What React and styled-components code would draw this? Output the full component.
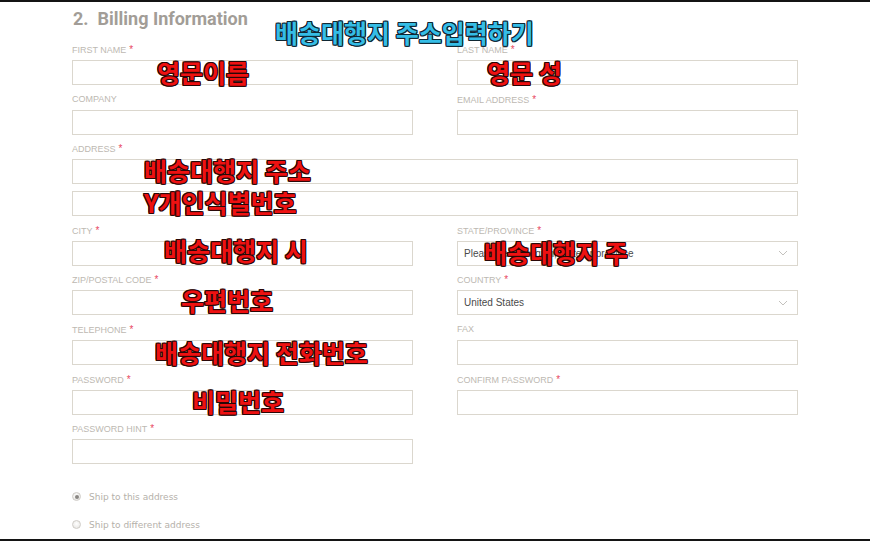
import React from 'react';
import styled, { createGlobalStyle } from 'styled-components';

const GlobalStyle = createGlobalStyle`
  html, body {
    margin: 0;
    padding: 0;
    background: #ffffff;
  }
  body {
    font-family: "Liberation Sans", Arial, sans-serif;
  }
  * {
    box-sizing: border-box;
  }
`;

const Page = styled.div`
  width: 870px;
  height: 541px;
  border-top: 2px solid #141414;
  border-bottom: 2px solid #141414;
  padding: 6px 72px 0 72px;
  overflow: hidden;
`;

const Header = styled.div`
  position: relative;
  height: 22px;
  margin-bottom: 14px;
`;

const Title = styled.h2`
  margin: 0;
  padding-left: 1px;
  font-family: Roboto, "Liberation Sans", sans-serif;
  font-weight: 700;
  font-size: 18px;
  line-height: 22px;
  color: #a29d97;
  white-space: pre;
`;

const Banner = styled.div`
  position: absolute;
  left: 203px;
  top: 10px;
  font-family: "Noto Sans CJK KR", sans-serif;
  font-weight: 700;
  font-size: 25px;
  line-height: 28px;
  color: #35bde6;
  white-space: nowrap;
  text-shadow:
    1px 0 #0f2733, -1px 0 #0f2733, 0 1px #0f2733, 0 -1px #0f2733,
    1px 1px #0f2733, -1px -1px #0f2733, 1px -1px #0f2733, -1px 1px #0f2733;
`;

const Grid = styled.div`
  display: grid;
  grid-template-columns: 1fr 1fr;
  column-gap: 44px;
`;

const Field = styled.div`
  position: relative;
  grid-column: ${(p) => (p.$wide ? '1 / span 2' : 'auto')};
  margin-bottom: 8.6px;
`;

const Label = styled.label`
  display: block;
  height: 11px;
  margin-bottom: 5px;
  font-size: 9px;
  line-height: 11px;
  color: #bdb9b2;
  text-transform: uppercase;
  white-space: nowrap;
`;

const Star = styled.span`
  color: #e8485f;
  font-size: 10px;
  margin-left: 3px;
`;

const Input = styled.div`
  height: 25px;
  border: 1px solid #dbd7ce;
  background: #ffffff;
  margin-top: ${(p) => (p.$next ? '7px' : '0')};
`;

const Select = styled.div`
  height: 25px;
  border: 1px solid #dbd7ce;
  background: #ffffff;
  display: flex;
  align-items: center;
  justify-content: space-between;
  padding: 0 9px 0 6px;
  font-size: 10px;
  color: #4a4a4a;
`;

const Chevron = () => (
  <svg width="10" height="6" viewBox="0 0 10 6" fill="none">
    <path d="M1 1 L5 5 L9 1" stroke="#bcbab6" strokeWidth="0.9" />
  </svg>
);

const Note = styled.span`
  position: absolute;
  left: ${(p) => p.$x}px;
  top: ${(p) => p.$y}px;
  font-family: "Noto Sans CJK KR", sans-serif;
  font-weight: 700;
  font-size: 25px;
  line-height: 28px;
  color: #ee1111;
  white-space: nowrap;
  pointer-events: none;
  text-shadow:
    1px 0 #2a0707, -1px 0 #2a0707, 0 1px #2a0707, 0 -1px #2a0707,
    1px 1px #2a0707, -1px -1px #2a0707, 1px -1px #2a0707, -1px 1px #2a0707;
`;

const Radios = styled.div`
  margin-top: 10px;
`;

const RadioRow = styled.div`
  height: 28px;
  display: flex;
  align-items: center;
`;

const Dot = styled.span`
  width: 9px;
  height: 9px;
  border-radius: 50%;
  border: 1px solid #cfccc7;
  background: radial-gradient(circle at 50% 40%, #ffffff, #e4e2de);
  display: flex;
  align-items: center;
  justify-content: center;
  margin-right: 8px;

  &::after {
    content: '';
    width: 4px;
    height: 4px;
    border-radius: 50%;
    background: ${(p) => (p.$checked ? '#8a8783' : 'transparent')};
  }
`;

const RadioText = styled.span`
  font-family: "DejaVu Sans", Verdana, sans-serif;
  font-size: 9px;
  color: #b5b1aa;
`;

const fields = [
  { label: 'First Name', req: true, note: ['영문이름', 85, 14] },
  { label: 'Last Name', req: true, note: ['영문 성', 30, 14] },
  { label: 'Company' },
  { label: 'Email Address', req: true },
  { label: 'Address', req: true, wide: true, double: true, note: ['배송대행지 주소', 72, 13], note2: ['Y개인식별번호', 72, 45] },
  { label: 'City', req: true, note: ['배송대행지 시', 92, 11] },
  { label: 'State/Province', req: true, select: 'Please select region, state or province', note: ['배송대행지 주', 27, 13] },
  { label: 'Zip/Postal Code', req: true, note: ['우편번호', 109, 12] },
  { label: 'Country', req: true, select: 'United States' },
  { label: 'Telephone', req: true, note: ['배송대행지 전화번호', 83, 14] },
  { label: 'Fax' },
  { label: 'Password', req: true, note: ['비밀번호', 120, 13] },
  { label: 'Confirm Password', req: true },
  { label: 'Password Hint', req: true },
];

export default function App() {
  return (
    <>
      <GlobalStyle />
      <Page>
        <Header>
          <Title>{'2.  Billing Information'}</Title>
          <Banner>배송대행지 주소입력하기</Banner>
        </Header>
        <Grid>
          {fields.map((f) => (
            <Field key={f.label} $wide={f.wide}>
              <Label>
                {f.label}
                {f.req && <Star>*</Star>}
              </Label>
              {f.select ? (
                <Select>
                  <span>{f.select}</span>
                  <Chevron />
                </Select>
              ) : (
                <Input />
              )}
              {f.double && <Input $next />}
              {f.note && (
                <Note $x={f.note[1]} $y={f.note[2]}>
                  {f.note[0]}
                </Note>
              )}
              {f.note2 && (
                <Note $x={f.note2[1]} $y={f.note2[2]}>
                  {f.note2[0]}
                </Note>
              )}
            </Field>
          ))}
        </Grid>
        <Radios>
          <RadioRow>
            <Dot $checked />
            <RadioText>Ship to this address</RadioText>
          </RadioRow>
          <RadioRow>
            <Dot />
            <RadioText>Ship to different address</RadioText>
          </RadioRow>
        </Radios>
      </Page>
    </>
  );
}
